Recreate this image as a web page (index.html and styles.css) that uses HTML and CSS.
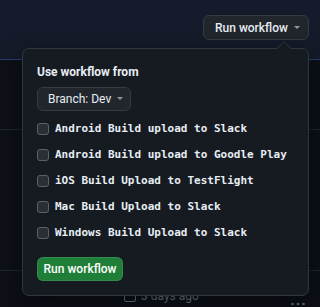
FILE: index.html
```html
<!DOCTYPE html>
<html>
<head>
<meta charset="utf-8">
<link rel="stylesheet" href="styles.css">
</head>
<body>
<div class="header">
  <button class="btn btn-top">Run workflow <span class="caret"></span></button>
</div>
<div class="list">
  <div class="row row-a"></div>
  <div class="row row-b"></div>
  <div class="row row-c">
    <span class="meta">
      <svg class="cal" width="12" height="12" viewBox="0 0 12 12"><rect x="0.5" y="0.5" width="11" height="11" rx="1.5" fill="none" stroke="#7d8590" stroke-width="1"/></svg>
      <span class="ago">3 days ago</span>
    </span>
    <svg class="kebab" width="16" height="16" viewBox="0 0 16 16"><circle cx="2.5" cy="8" r="1.3" fill="#6e7681"/><circle cx="8" cy="8" r="1.3" fill="#6e7681"/><circle cx="13.5" cy="8" r="1.3" fill="#6e7681"/></svg>
  </div>
</div>
<div class="popover">
  <div class="pop-title">Use workflow from</div>
  <button class="btn btn-branch">Branch: Dev <span class="caret"></span></button>
  <div class="checks">
    <label class="check"><input type="checkbox"><span>Android Build upload to Slack</span></label>
    <label class="check"><input type="checkbox"><span>Android Build upload to Goodle Play</span></label>
    <label class="check"><input type="checkbox"><span>iOS Build Upload to TestFlight</span></label>
    <label class="check"><input type="checkbox"><span>Mac Build Upload to Slack</span></label>
    <label class="check"><input type="checkbox"><span>Windows Build Upload to Slack</span></label>
  </div>
  <button class="btn btn-green">Run workflow</button>
</div>
</body>
</html>
```
FILE: styles.css
```css
* { box-sizing: border-box; }
html, body { margin: 0; padding: 0; }
body {
  background: #0d1117;
  font-family: Roboto, "Liberation Sans", sans-serif;
  color: #e6edf3;
  width: 320px;
  height: 307px;
  overflow: hidden;
  position: relative;
}
.header {
  height: 60px;
  background: #151b2a;
  border-bottom: 1px solid #24406f;
  display: flex;
  justify-content: flex-end;
  align-items: flex-start;
  padding: 15px 11px 0 0;
}
.btn {
  font-family: inherit;
  font-size: 12px;
  font-weight: 500;
  color: #e6edf3;
  background: #21262d;
  border: 1px solid #363b42;
  border-radius: 6px;
  display: inline-flex;
  align-items: center;
  padding: 0 11px;
  height: 25px;
  white-space: nowrap;
  cursor: pointer;
}
.btn-top {
  width: 106px;
  justify-content: space-between;
}
.caret {
  display: inline-block;
  width: 0;
  height: 0;
  border-top: 3px solid #9198a1;
  border-left: 3px solid transparent;
  border-right: 3px solid transparent;
  margin-left: 6px;
}
.list .row { border-bottom: 1px solid #21262d; }
.row-a { height: 70px; }
.row-b { height: 141px; }
.row-c {
  display: flex;
  justify-content: space-between;
  align-items: flex-start;
  padding: 19px 14px 0 124px;
}
.meta { display: flex; align-items: center; gap: 5px; height: 12px; }
.ago { font-size: 12px; color: #7d8590; line-height: 14px; white-space: nowrap; }
.kebab { margin-top: 6px; }

.popover {
  position: absolute;
  left: 22px;
  top: 48px;
  width: 287px;
  height: 248px;
  background: #161b22;
  border: 1px solid #30363d;
  border-radius: 7px;
  padding: 14px;
  display: flex;
  flex-direction: column;
  align-items: flex-start;
  box-shadow: 0 8px 24px rgba(1, 4, 9, 0.6);
}
.popover::before,
.popover::after {
  content: "";
  position: absolute;
  width: 0;
  height: 0;
  border-style: solid;
  border-color: transparent;
}
.popover::before {
  right: 16px;
  top: -8px;
  border-width: 0 8px 8px 8px;
  border-bottom-color: #30363d;
}
.popover::after {
  right: 17px;
  top: -7px;
  border-width: 0 7px 7px 7px;
  border-bottom-color: #161b22;
}
.pop-title {
  font-size: 12px;
  font-weight: 700;
  line-height: 18px;
  white-space: nowrap;
}
.btn-branch {
  margin-top: 6px;
  height: 24px;
  width: 94px;
  font-weight: 400;
  padding: 0 10px;
  justify-content: space-between;
}
.checks {
  margin-top: 9px;
  display: flex;
  flex-direction: column;
  gap: 8px;
}
.check {
  display: flex;
  align-items: center;
  height: 18px;
  gap: 6px;
  font-family: "DejaVu Sans Mono", monospace;
  font-weight: bold;
  font-size: 11px;
  color: #e6edf3;
  white-space: nowrap;
}
.check input {
  appearance: none;
  -webkit-appearance: none;
  margin: 0;
  width: 12px;
  height: 12px;
  border: 1px solid #5d6269;
  background: #2b2f35;
  border-radius: 3px;
}
.btn-green {
  margin-top: 15px;
  height: 25px;
  width: 86px;
  padding: 0 8px;
  background: #1f7f38;
  border-color: rgba(240, 246, 252, 0.1);
  color: #ffffff;
  justify-content: center;
}
```
